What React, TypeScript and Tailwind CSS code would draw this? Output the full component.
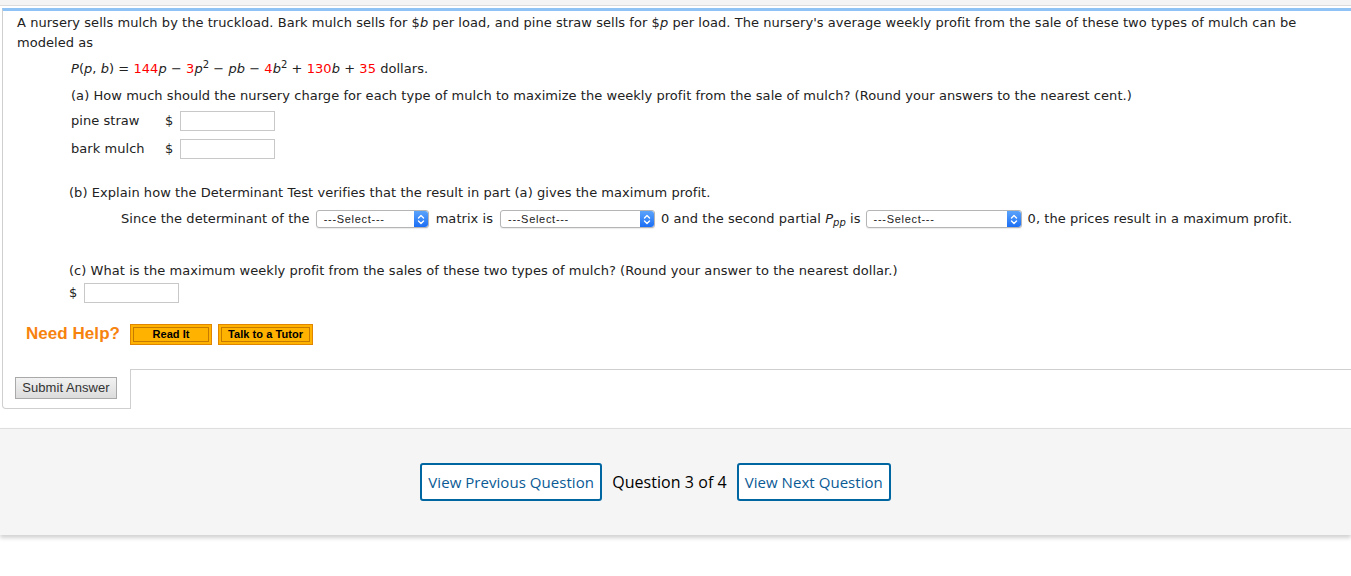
import React from "react";

const verdana = { fontFamily: '"DejaVu Sans", Verdana, sans-serif' };

function Select({ width }: { width: number }) {
  return (
    <span
      className="inline-flex h-[18px] items-stretch rounded-[3px] border border-[#b5b5b5] bg-white align-middle shadow-[0_1px_1px_rgba(0,0,0,0.08)]"
      style={{ width }}
    >
      <span
        className="flex flex-1 items-center pl-[7px] text-[11px] tracking-[0.7px] text-[#222]"
        style={{ fontFamily: '"Liberation Sans", Arial, sans-serif' }}
      >
        ---Select---
      </span>
      <span className="flex w-[14px] items-center justify-center rounded-r-[3px] bg-gradient-to-b from-[#5aa3fb] to-[#1b6ef5]">
        <svg width="8" height="11" viewBox="0 0 8 11" fill="none" stroke="white" strokeWidth="1.4" strokeLinecap="round" strokeLinejoin="round">
          <path d="M1.5 4 L4 1.5 L6.5 4" />
          <path d="M1.5 7 L4 9.5 L6.5 7" />
        </svg>
      </span>
    </span>
  );
}

function Input({ w = 95 }: { w?: number }) {
  return <span className="inline-block h-[20px] border border-[#c8c8c8] bg-white" style={{ width: w }} />;
}

export default function App() {
  return (
    <div className="min-h-[576px] bg-white text-[13px] tracking-[0.05px] text-[#222]" style={verdana}>
      <div className="h-[6px] border-b border-[#dcdcdc] bg-[#f4f4f4]" />
      <div className="ml-[2px] mt-[2px]">
        <div className="border-l border-t-[3px] border-l-[#cfcfcf] border-t-[#8fc3f5] pl-[14px] pr-[40px] pt-[2px]">
          <p className="leading-[20px]">
            A nursery sells mulch by the truckload. Bark mulch sells for $<i>b</i> per load, and pine straw sells for $<i>p</i> per load. The nursery's average weekly profit from the sale of these two types of mulch can be modeled as
          </p>
          <p className="ml-[54px] mt-[6px] leading-[20px]">
            <i>P</i>(<i>p</i>, <i>b</i>) = <span className="text-[#ff0000]">144</span><i>p</i> − <span className="text-[#ff0000]">3</span><i>p</i><sup className="text-[10px]">2</sup> − <i>pb</i> − <span className="text-[#ff0000]">4</span><i>b</i><sup className="text-[10px]">2</sup> + <span className="text-[#ff0000]">130</span><i>b</i> + <span className="text-[#ff0000]">35</span> dollars.
          </p>
          <p className="ml-[54px] mt-[7px] leading-[20px]">
            (a) How much should the nursery charge for each type of mulch to maximize the weekly profit from the sale of mulch? (Round your answers to the nearest cent.)
          </p>
          <div className="ml-[54px] mt-[1px]">
            <div className="flex h-[28px] items-center">
              <span className="w-[94px]">pine straw</span>
              <span className="w-[15px]">$</span>
              <Input />
            </div>
            <div className="flex h-[28px] items-center">
              <span className="w-[94px]">bark mulch</span>
              <span className="w-[15px]">$</span>
              <Input />
            </div>
          </div>
          <p className="ml-[52px] mt-[20px] leading-[20px]">
            (b) Explain how the Determinant Test verifies that the result in part (a) gives the maximum profit.
          </p>
          <div className="ml-[104px] mt-[6px] flex h-[20px] items-center whitespace-nowrap">
            <span className="mr-[6px]">Since the determinant of the</span>
            <Select width={113} />
            <span className="ml-[7px] mr-[7px]">matrix is</span>
            <Select width={155} />
            <span className="ml-[6px] mr-[5px]">
              0 and the second partial <i>P</i>
              <sub className="text-[10px] italic">pp</sub> is
            </span>
            <Select width={156} />
            <span className="ml-[6px]">0, the prices result in a maximum profit.</span>
          </div>
          <p className="ml-[52px] mt-[32px] leading-[20px]">
            (c) What is the maximum weekly profit from the sales of these two types of mulch? (Round your answer to the nearest dollar.)
          </p>
          <div className="ml-[52px] mt-[2px] flex h-[20px] items-center">
            <span className="w-[15px]">$</span>
            <Input />
          </div>
          <div
            className="ml-[9px] mt-[20px] box-content flex h-[22px] items-center pb-[24px]"
            style={{ fontFamily: '"Liberation Sans", Arial, sans-serif' }}
          >
            <span className="mr-[10px] text-[17px] font-bold text-[#f7830f]">Need Help?</span>
            <button className="mr-[6px] h-[21px] w-[82px] border border-[#e08600] bg-[#ffb300] p-[2px]">
              <span className="flex h-full items-center justify-center border border-[#c77a00] text-[11px] font-bold text-black">Read It</span>
            </button>
            <button className="h-[21px] w-[95px] border border-[#e08600] bg-[#ffb300] p-[2px]">
              <span className="flex h-full items-center justify-center border border-[#c77a00] text-[11px] font-bold text-black">Talk to a Tutor</span>
            </button>
          </div>
        </div>
        <div className="flex">
          <div className="h-[40px] w-[129px] rounded-bl-[4px] border-b border-l border-r border-[#cfcfcf] pl-[12px] pt-[8px]">
            <button
              className="h-[22px] w-[102px] border border-[#a9a9a9] bg-gradient-to-b from-[#f2f2f2] to-[#dcdcdc] text-[13px] text-[#333]"
              style={{ fontFamily: '"Liberation Sans", Arial, sans-serif' }}
            >
              Submit Answer
            </button>
          </div>
          <div className="flex-1 border-t border-[#cfcfcf]" />
        </div>
      </div>
      <div
        className="mt-[19px] flex h-[107px] items-center justify-center gap-[10px] border-t border-[#dedede] bg-[#f5f5f5] pr-[40px] shadow-[0_3px_4px_rgba(0,0,0,0.18)]"
        style={{ fontFamily: '"Open Sans", sans-serif' }}
      >
        <button className="h-[38px] w-[182px] rounded-[3px] border-2 border-[#0066a1] bg-white text-[15px] text-[#0a5a95]">
          View Previous Question
        </button>
        <span className="text-[16px] text-black">Question 3 of 4</span>
        <button className="h-[38px] w-[154px] rounded-[3px] border-2 border-[#0066a1] bg-white text-[15px] text-[#0a5a95]">
          View Next Question
        </button>
      </div>
    </div>
  );
}
